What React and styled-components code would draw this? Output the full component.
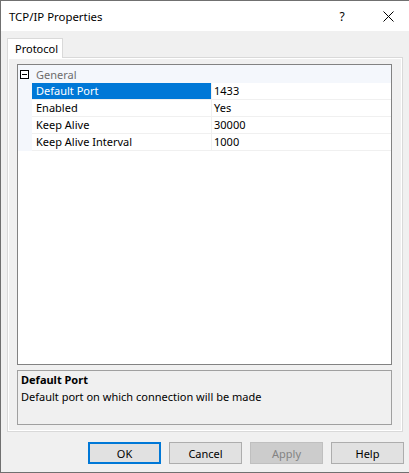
import React from "react";
import styled, { createGlobalStyle } from "styled-components";

const GlobalStyle = createGlobalStyle`
  html, body {
    margin: 0;
    padding: 0;
    background: #f0f0f0;
  }
  body {
    font-family: "Noto Sans", "Liberation Sans", sans-serif;
    font-size: 11px;
    color: #000;
  }
`;

const properties = [
  { name: "Default Port", value: "1433" },
  { name: "Enabled", value: "Yes" },
  { name: "Keep Alive", value: "30000" },
  { name: "Keep Alive Interval", value: "1000" },
];

export default function App() {
  const [selected, setSelected] = React.useState(0);
  const current = properties[selected];

  return (
    <>
      <GlobalStyle />
      <Window>
        <TitleBar>
          <Title>TCP/IP Properties</Title>
          <HelpGlyph>?</HelpGlyph>
          <CloseButton>
            <svg width="11" height="11" viewBox="0 0 11 11">
              <path d="M0.5 0.5 L10.5 10.5 M10.5 0.5 L0.5 10.5" stroke="#000" strokeWidth="1" />
            </svg>
          </CloseButton>
        </TitleBar>

        <Body>
          <TabStrip>
            <Tab>Protocol</Tab>
          </TabStrip>
          <TabPage>
            <Grid>
              <GroupRow>
                <Toggle>
                  <svg width="9" height="9" viewBox="0 0 9 9">
                    <rect x="0.5" y="0.5" width="8" height="8" fill="#fff" stroke="#000" />
                    <path d="M2 4.5 H7" stroke="#000" />
                  </svg>
                </Toggle>
                <GroupLabel>General</GroupLabel>
              </GroupRow>
              {properties.map((p, i) => (
                <Row key={p.name} onClick={() => setSelected(i)}>
                  <Margin />
                  <NameCell selected={i === selected}>{p.name}</NameCell>
                  <ValueCell>{p.value}</ValueCell>
                </Row>
              ))}
            </Grid>
            <Description>
              <DescTitle>{current.name}</DescTitle>
              <DescText>Default port on which connection will be made</DescText>
            </Description>
          </TabPage>

          <ButtonRow>
            <Button primary>OK</Button>
            <Button>Cancel</Button>
            <Button disabled>Apply</Button>
            <Button>Help</Button>
          </ButtonRow>
        </Body>
      </Window>
    </>
  );
}

// window frame
const Window = styled.div`
  width: 409px;
  height: 473px;
  box-sizing: border-box;
  border-top: 1px solid #707070;
  border-left: 1px solid #707070;
  border-bottom: 1px solid #707070;
  background: #f0f0f0;
  display: flex;
  flex-direction: column;
`;

const TitleBar = styled.div`
  height: 30px;
  background: #fff;
  display: flex;
  align-items: center;
  padding-left: 8px;
`;

const Title = styled.div`
  flex: 1;
  font-size: 11.4px;
`;

const HelpGlyph = styled.div`
  font-size: 12px;
  width: 10px;
  text-align: center;
  margin-right: 36px;
`;

const CloseButton = styled.div`
  display: flex;
  align-items: center;
  margin-right: 15px;
`;

const Body = styled.div`
  flex: 1;
  padding: 7px 5px 0 6px;
  display: flex;
  flex-direction: column;
`;

// tab control
const TabStrip = styled.div`
  display: flex;
  position: relative;
  z-index: 1;
`;

const Tab = styled.div`
  width: 56px;
  height: 20px;
  box-sizing: border-box;
  border: 1px solid #d9d9d9;
  border-bottom: none;
  background: #fff;
  padding-left: 7px;
  line-height: 19px;
  margin-bottom: -1px;
`;

const TabPage = styled.div`
  width: 396px;
  height: 375px;
  box-sizing: border-box;
  border: 1px solid #d9d9d9;
  box-shadow: inset 1px 1px 0 #fff, inset -1px -1px 0 #fff;
  padding: 6px 10px 6px 9px;
  display: flex;
  flex-direction: column;
  gap: 5px;
`;

// property grid
const Grid = styled.div`
  height: 301px;
  box-sizing: border-box;
  border: 1px solid #828282;
  background: #fff;
`;

const GroupRow = styled.div`
  height: 18px;
  background: #f4f7fc;
  display: flex;
  align-items: center;
`;

const Toggle = styled.div`
  width: 9px;
  height: 9px;
  margin-left: 2px;
  display: flex;
`;

const GroupLabel = styled.div`
  color: #6d6d6d;
  margin-left: 7px;
`;

const Row = styled.div`
  display: flex;
  height: 17px;
`;

const Margin = styled.div`
  width: 14px;
  background: #f4f7fc;
`;

const NameCell = styled.div`
  width: 179px;
  box-sizing: border-box;
  padding-left: 4px;
  line-height: 16px;
  border-bottom: 1px solid #f0f0f0;
  background: ${(props) => (props.selected ? "#0078d7" : "#fff")};
  color: ${(props) => (props.selected ? "#fff" : "#000")};
  white-space: nowrap;
`;

const ValueCell = styled.div`
  flex: 1;
  padding-left: 2px;
  line-height: 16px;
  border-left: 1px solid #f0f0f0;
  border-bottom: 1px solid #f0f0f0;
`;

const Description = styled.div`
  height: 55px;
  box-sizing: border-box;
  border: 1px solid #a0a0a0;
  padding: 0 3px;
  line-height: 17px;
`;

const DescTitle = styled.div`
  font-weight: bold;
`;

const DescText = styled.div``;

// dialog buttons
const ButtonRow = styled.div`
  display: flex;
  justify-content: flex-end;
  gap: 8px;
  margin-top: 10px;
`;

const Button = styled.button`
  width: 73px;
  height: 22px;
  box-sizing: border-box;
  font-family: inherit;
  font-size: 11px;
  padding: 0;
  background: ${(props) => (props.disabled ? "#cccccc" : "#e1e1e1")};
  color: ${(props) => (props.disabled ? "#838383" : "#000")};
  border: ${(props) =>
    props.primary ? "2px solid #0078d7" : props.disabled ? "1px solid #bfbfbf" : "1px solid #adadad"};
`;
